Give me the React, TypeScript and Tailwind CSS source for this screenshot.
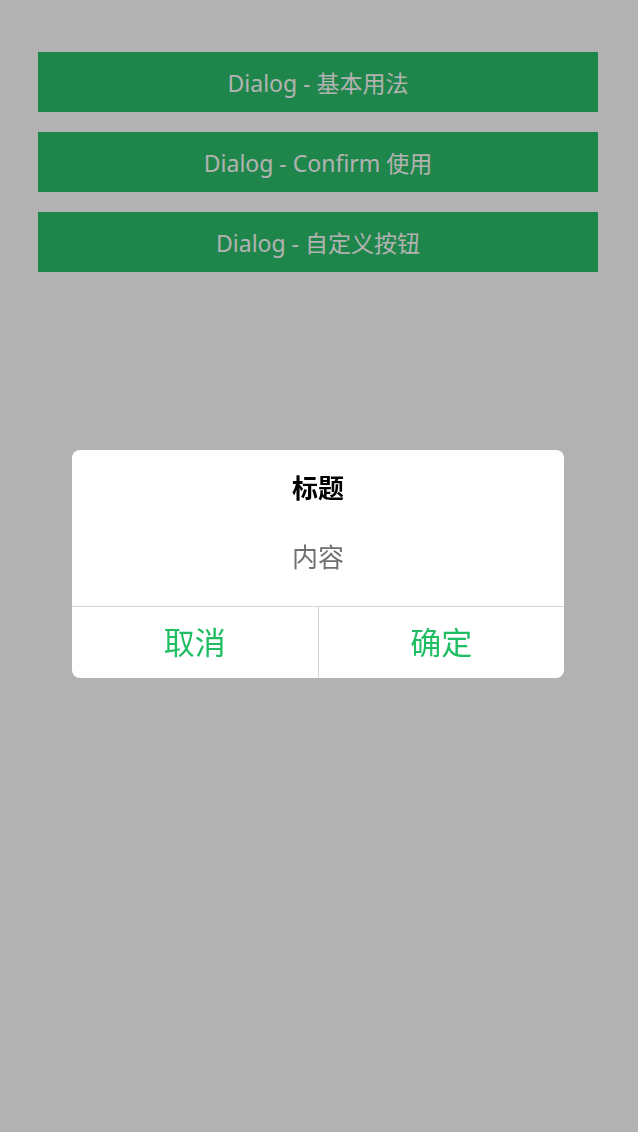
import React from "react";

export default function App() {
  const items = ["Dialog - 基本用法", "Dialog - Confirm 使用", "Dialog - 自定义按钮"];
  return (
    <div
      className="relative min-h-[1132px] w-full bg-white"
      style={{ fontFamily: '"Noto Sans", "Noto Sans CJK SC", sans-serif' }}
    >
      <div className="flex flex-col gap-5 pl-[38px] pt-[52px]">
        {items.map((t) => (
          <div
            key={t}
            className="flex h-[60px] w-[560px] items-center justify-center bg-[#2bc16a] pt-[2px] text-[23px] text-white"
          >
            {t}
          </div>
        ))}
      </div>
      <div className="fixed inset-0 flex items-center justify-center bg-black/30">
        <div className="mb-[4px] mr-[2px] w-[492px] overflow-hidden rounded-[8px] bg-white">
          <div className="pt-[20px] text-center text-[26px] font-bold leading-[36px] text-black">标题</div>
          <div className="pb-[22px] pt-[24px] text-center text-[26px] leading-[54px] text-[#707070]">内容</div>
          <div className="flex h-[72px] border-t border-[#d5d5d0]">
            <div className="flex flex-1 items-center justify-center border-r border-[#d5d5d0] text-[31px] text-[#1fbe62]">取消</div>
            <div className="flex flex-1 items-center justify-center text-[31px] text-[#1fbe62]">确定</div>
          </div>
        </div>
      </div>
    </div>
  );
}
